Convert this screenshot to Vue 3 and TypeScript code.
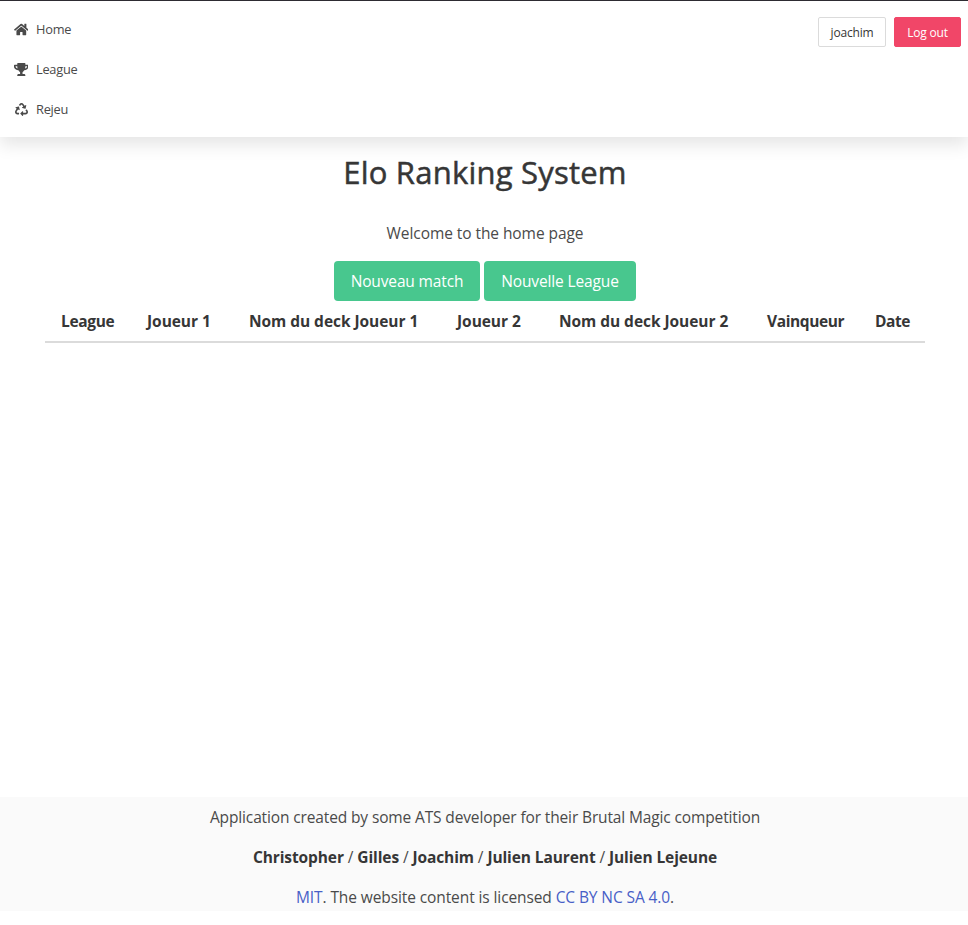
<script setup lang="ts">
interface NavLink {
  label: string
  viewBox: string
  path: string
}

const links: NavLink[] = [
  {
    label: 'Home',
    viewBox: '0 0 576 512',
    path: 'M280.37 148.26L96 300.11V464a16 16 0 0 0 16 16l112.06-.29a16 16 0 0 0 15.92-16V368a16 16 0 0 1 16-16h64a16 16 0 0 1 16 16v95.64a16 16 0 0 0 16 16.05L464 480a16 16 0 0 0 16-16V300L295.67 148.26a12.19 12.19 0 0 0-15.3 0zM571.6 251.47L488 182.56V44.05a12 12 0 0 0-12-12h-56a12 12 0 0 0-12 12v72.61L318.47 43a48 48 0 0 0-61 0L4.34 251.47a12 12 0 0 0-1.6 16.9l25.5 31A12 12 0 0 0 45.15 301l235.22-193.74a12.19 12.19 0 0 1 15.3 0L530.9 301a12 12 0 0 0 16.9-1.6l25.5-31a12 12 0 0 0-1.7-16.93z',
  },
  {
    label: 'League',
    viewBox: '0 0 576 512',
    path: 'M552 64H448V24c0-13.3-10.7-24-24-24H152c-13.3 0-24 10.7-24 24v40H24C10.7 64 0 74.7 0 88v56c0 35.7 22.5 72.4 61.9 100.7 31.5 22.7 69.8 37.1 110 41.7C203.3 338.5 240 360 240 360v72h-48c-35.3 0-64 20.7-64 56v12c0 6.6 5.4 12 12 12h296c6.6 0 12-5.4 12-12v-12c0-35.3-28.7-56-64-56h-48v-72s36.7-21.5 68.1-73.6c40.3-4.6 78.6-19 110-41.7 39.3-28.3 61.9-65 61.9-100.7V88c0-13.3-10.7-24-24-24zM99.3 192.8C74.9 175.2 64 155.6 64 144v-16h64.2c1 32.6 5.8 61.2 12.8 86.2-15.1-5.2-29.2-12.4-41.7-21.4zM512 144c0 16.1-17.7 36.1-35.3 48.8-12.5 9-26.7 16.2-41.8 21.4 7-25 11.8-53.6 12.8-86.2H512v16z',
  },
  {
    label: 'Rejeu',
    viewBox: '0 0 512 512',
    path: 'M184.561 261.903c3.232 13.997-12.123 24.635-24.068 17.168l-40.736-25.455-50.867 81.402C55.606 356.273 70.96 384 96.012 384H148c6.627 0 12 5.373 12 12v40c0 6.627-5.373 12-12 12H96.115c-75.334 0-121.302-83.048-81.408-146.88l50.822-81.388-40.725-25.448c-12.081-7.547-8.966-25.961 4.879-29.158l110.237-25.45c8.611-1.988 17.201 3.381 19.189 11.99l25.452 110.237zm98.561-182.915l41.289 66.076-40.74 25.457c-12.051 7.528-9 25.953 4.879 29.158l110.237 25.45c8.672 1.999 17.215-3.438 19.189-11.99l25.45-110.237c3.197-13.844-11.99-24.719-24.068-17.168l-40.687 25.424-41.263-66.082c-37.521-60.033-125.209-60.171-162.816 0l-17.963 28.766c-3.51 5.62-1.8 13.021 3.82 16.533l33.919 21.195c5.62 3.512 13.024 1.803 16.536-3.817l17.961-28.743c12.712-20.341 41.973-19.676 54.257-.022zM497.288 301.12l-27.515-44.065c-3.511-5.623-10.916-7.334-16.538-3.821l-33.861 21.159c-5.62 3.512-7.33 10.915-3.818 16.536l27.564 44.112c13.257 21.211-2.057 48.96-27.136 48.96H320V336.02c0-14.213-17.242-21.383-27.313-11.313l-80 79.981c-6.249 6.248-6.249 16.379 0 22.627l80 79.989C302.689 517.308 320 510.3 320 495.989V448h95.88c75.274 0 121.335-82.997 81.408-146.88z',
  },
]

const columns: string[] = [
  'League',
  'Joueur 1',
  'Nom du deck Joueur 1',
  'Joueur 2',
  'Nom du deck Joueur 2',
  'Vainqueur',
  'Date',
]

const authors: string[] = ['Christopher', 'Gilles', 'Joachim', 'Julien Laurent', 'Julien Lejeune']
</script>

<template>
  <div class="page">
    <nav class="navbar">
      <div class="menu">
        <a v-for="link in links" :key="link.label" class="menu-item">
          <span class="icon">
            <svg :viewBox="link.viewBox" aria-hidden="true"><path :d="link.path" /></svg>
          </span>
          <span>{{ link.label }}</span>
        </a>
      </div>
      <div class="account">
        <button class="small-button user">joachim</button>
        <button class="small-button logout">Log out</button>
      </div>
    </nav>

    <main class="content">
      <h1 class="title">Elo Ranking System</h1>
      <p class="welcome">Welcome to the home page</p>
      <div class="actions">
        <button class="action match">Nouveau match</button>
        <button class="action league">Nouvelle League</button>
      </div>
      <table class="matches">
        <thead>
          <tr>
            <th v-for="column in columns" :key="column">{{ column }}</th>
          </tr>
        </thead>
      </table>
    </main>

    <footer class="footer">
      <p class="credit">Application created by some ATS developer for their Brutal Magic competition</p>
      <p class="authors">
        <template v-for="(author, index) in authors" :key="author"><template v-if="index > 0"> / </template><strong>{{ author }}</strong></template>
      </p>
      <p class="license"><a>MIT</a>. The website content is licensed <a>CC BY NC SA 4.0</a>.</p>
    </footer>
  </div>
</template>

<style>
body {
  background: #fff;
}
</style>

<style scoped>
.page {
  box-sizing: border-box;
  display: flex;
  flex-direction: column;
  height: 911px;
  border-top: 1px solid #2e2c33;
  font-family: 'Open Sans', 'Noto Sans', sans-serif;
  font-size: 15.5px;
  line-height: 24px;
  color: #4a4a4a;
}

button {
  font-family: inherit;
  cursor: pointer;
}

.navbar {
  display: flex;
  justify-content: space-between;
  box-sizing: border-box;
  height: 136px;
  padding: 8px 7px 0 9px;
  background: #fff;
  box-shadow: 0 8px 16px rgba(10, 10, 10, 0.1);
}

.menu-item {
  display: flex;
  align-items: center;
  height: 40px;
  gap: 3px;
  font-size: 12.8px;
  letter-spacing: -0.25px;
}

.icon {
  display: flex;
  align-items: center;
  justify-content: center;
  width: 24px;
  height: 24px;
}

.icon svg {
  height: 13px;
  fill: #4a4a4a;
}

.account {
  display: flex;
  align-items: flex-start;
  gap: 8px;
  padding-top: 8px;
}

.small-button {
  box-sizing: border-box;
  height: 30px;
  padding: 2px 0 0;
  border: 1px solid #dbdbdb;
  border-radius: 2px;
  background: #fff;
  font-size: 12px;
  line-height: 26px;
  letter-spacing: -0.2px;
  color: #363636;
}

.user {
  width: 68px;
}

.logout {
  width: 67px;
  border-color: #f14668;
  background: #f14668;
  color: #fff;
}

.content {
  display: flex;
  flex: 1;
  flex-direction: column;
  align-items: center;
  padding: 17px 0 0 2px;
}

.title {
  margin: 0;
  font-size: 31px;
  font-weight: 500;
  line-height: 36px;
  letter-spacing: 0.22px;
  color: #363636;
  -webkit-text-stroke: 0.5px #363636;
}

.welcome {
  margin: 31px 0 16px;
  letter-spacing: -0.07px;
}

.actions {
  display: flex;
  gap: 4px;
}

.action {
  height: 40px;
  padding: 0;
  border: 0;
  border-radius: 4px;
  background: #48c78e;
  font-size: 15.5px;
  line-height: 40px;
  letter-spacing: -0.14px;
  color: #fff;
}

.match {
  width: 146px;
}

.league {
  width: 152px;
}

.matches {
  width: 880px;
  border-collapse: collapse;
}

.matches tr {
  display: grid;
  grid-template-columns: 86px 102px 208px 102px 208px 108px 66px;
  border-bottom: 2px solid #dbdbdb;
}

.matches th {
  padding: 8px 0 8px 16px;
  font-weight: 700;
  text-align: left;
  white-space: nowrap;
  letter-spacing: -0.05px;
  color: #363636;
}

.matches th:first-child {
  letter-spacing: -0.35px;
}

.matches th:nth-child(n + 6) {
  letter-spacing: -0.4px;
}

.footer {
  box-sizing: border-box;
  height: 114px;
  padding: 8px 0 0 2px;
  background: #fafafa;
  text-align: center;
}

.footer p {
  margin: 0 0 16px;
}

.credit {
  letter-spacing: -0.133px;
}

.authors {
  letter-spacing: -0.1px;
}

.license {
  letter-spacing: -0.1px;
}

.footer strong {
  font-weight: 700;
  color: #363636;
}

.footer a {
  color: #485fc7;
}
</style>
